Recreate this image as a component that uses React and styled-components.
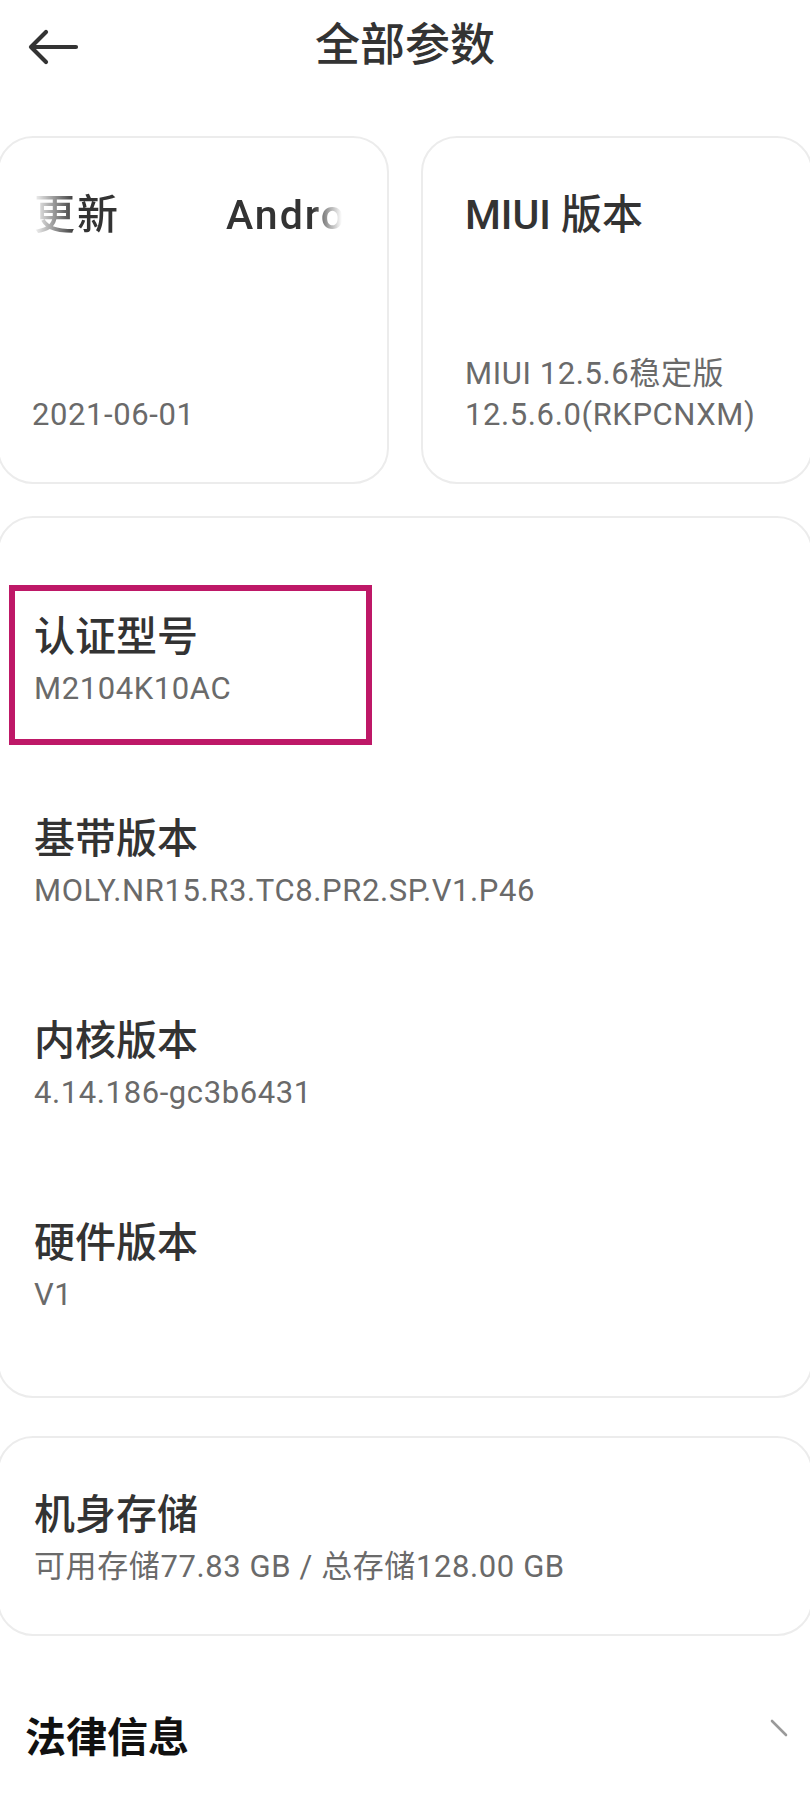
import React from "react";
import styled, { createGlobalStyle } from "styled-components";

const Global = createGlobalStyle`
  html, body { margin: 0; padding: 0; background: #fff; }
  body { overflow: hidden; width: 810px; }
  * { box-sizing: border-box; }
`;

const FONT = `Roboto, "Noto Sans CJK SC", "Noto Sans", sans-serif`;

const Page = styled.div`
  width: 810px;
  min-height: 1797px;
  background: #fff;
  font-family: ${FONT};
  overflow: hidden;
`;

const Header = styled.header`
  position: relative;
  height: 92px;
  display: flex;
  align-items: center;
  justify-content: center;
`;

const BackButton = styled.button`
  position: absolute;
  left: 26px;
  top: 28px;
  width: 54px;
  height: 38px;
  border: 0;
  padding: 0;
  background: transparent;
  display: flex;
  align-items: center;
  justify-content: center;
`;

const Title = styled.h1`
  margin: 0;
  font-size: 45px;
  line-height: 54px;
  font-weight: 500;
  color: #333;
  font-family: ${FONT};
`;

const Content = styled.main`
  margin: 44px -3px 0;
  display: flex;
  flex-direction: column;
`;

const CardRow = styled.div`
  display: grid;
  grid-template-columns: 392px 392px;
  gap: 32px;
`;

const Card = styled.section`
  position: relative;
  background: #fff;
  border: 2px solid #ececec;
  border-radius: 36px;
`;

const SmallCard = styled(Card)`
  height: 348px;
  display: flex;
  flex-direction: column;
  justify-content: space-between;
  padding: 52px 45px 47px ${(p) => p.$padLeft}px;
`;

const CardTitle = styled.div`
  font-size: 41px;
  line-height: 50px;
  font-weight: 500;
  color: #333;
  white-space: nowrap;
`;

const Marquee = styled.div`
  overflow: hidden;
  display: flex;
  gap: 106px;
  padding-left: 2px;
  font-size: 41px;
  line-height: 50px;
  font-weight: 500;
  letter-spacing: 2px;
  color: #333;
  white-space: nowrap;
  -webkit-mask-image: linear-gradient(to right, transparent 0, #000 44px, #000 calc(100% - 30px), transparent 100%);
  mask-image: linear-gradient(to right, transparent 0, #000 44px, #000 calc(100% - 30px), transparent 100%);
`;

const Values = styled.div`
  display: flex;
  flex-direction: column;
`;

const Value = styled.div`
  font-size: 31px;
  line-height: ${(p) => p.$lh || 41}px;
  letter-spacing: 0.6px;
  color: #6a6a6a;
  white-space: nowrap;
`;

const ListCard = styled(Card)`
  margin-top: ${(p) => p.$top}px;
  padding: ${(p) => p.$pad};
  display: flex;
  flex-direction: column;
  gap: ${(p) => p.$gap || 0}px;
`;

const Item = styled.div`
  display: flex;
  flex-direction: column;
  gap: 3px;
`;

const ItemTitle = styled.div`
  font-size: 41px;
  line-height: 54px;
  font-weight: 500;
  color: #333;
`;

const Highlight = styled.div`
  position: absolute;
  left: 10px;
  top: 67px;
  width: 363px;
  height: 160px;
  border: 6px solid #be1867;
  pointer-events: none;
`;

const LinkRow = styled.div`
  margin-top: 77px;
  padding: 0 24px 0 28px;
  display: flex;
  align-items: center;
  justify-content: space-between;
  height: 50px;
`;

const LinkTitle = styled.div`
  font-size: 41px;
  line-height: 50px;
  font-weight: 700;
  color: #111;
`;

const Chevron = styled.svg`
  width: 20px;
  height: 20px;
  margin-bottom: 20px;
`;

const items = [
  { title: "认证型号", value: "M2104K10AC" },
  { title: "基带版本", value: "MOLY.NR15.R3.TC8.PR2.SP.V1.P46" },
  { title: "内核版本", value: "4.14.186-gc3b6431" },
  { title: "硬件版本", value: "V1" },
];

export default function App() {
  return (
    <Page>
      <Global />
      <Header>
        <BackButton aria-label="返回">
          <svg width="54" height="38" viewBox="0 0 54 38" fill="none">
            <path
              d="M5 19 H50 M20 4 L5 19 L20 34"
              stroke="#333"
              strokeWidth="4.2"
              strokeLinecap="round"
              strokeLinejoin="round"
            />
          </svg>
        </BackButton>
        <Title>全部参数</Title>
      </Header>

      <Content>
        <CardRow>
          <SmallCard $padLeft={33}>
            <Marquee>
              <span>更新</span>
              <span>Android</span>
            </Marquee>
            <Value>2021-06-01</Value>
          </SmallCard>
          <SmallCard $padLeft={42}>
            <CardTitle>MIUI 版本</CardTitle>
            <Values>
              <Value>MIUI 12.5.6稳定版</Value>
              <Value>12.5.6.0(RKPCNXM)</Value>
            </Values>
          </SmallCard>
        </CardRow>

        <ListCard $top={32} $pad="92px 35px 79px" $gap={101}>
          {items.map((it) => (
            <Item key={it.title}>
              <ItemTitle>{it.title}</ItemTitle>
              <Value $lh={44}>{it.value}</Value>
            </Item>
          ))}
          <Highlight />
        </ListCard>

        <ListCard $top={38} $pad="50px 35px 45px">
          <Item>
            <ItemTitle>机身存储</ItemTitle>
            <Value $lh={44}>可用存储77.83 GB / 总存储128.00 GB</Value>
          </Item>
        </ListCard>

        <LinkRow>
          <LinkTitle>法律信息</LinkTitle>
          <Chevron viewBox="0 0 20 20" fill="none">
            <path d="M3 3 L17 17" stroke="#9a9a9a" strokeWidth="2.6" strokeLinecap="round" />
          </Chevron>
        </LinkRow>
      </Content>
    </Page>
  );
}
